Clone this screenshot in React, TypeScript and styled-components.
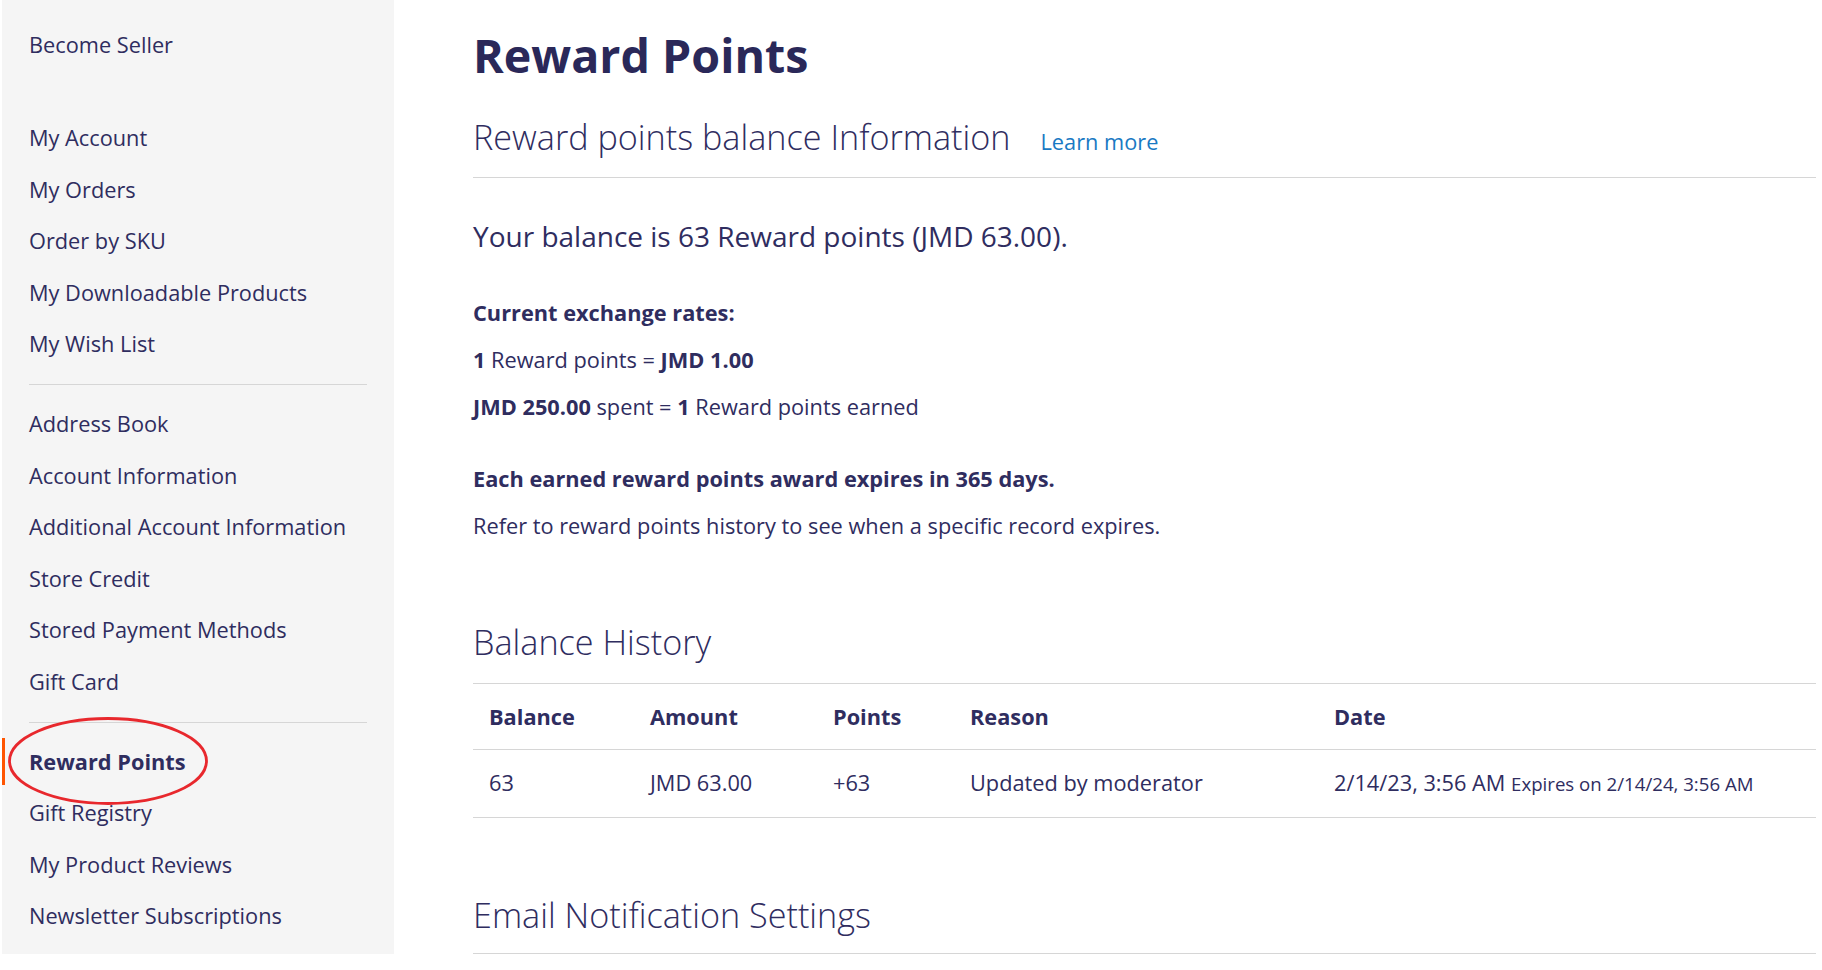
import React from 'react';
import styled, { createGlobalStyle } from 'styled-components';

const NAVY = '#2f2d5f';
const LINE = '#d6d6d6';

const GlobalStyle = createGlobalStyle`
  html, body { margin: 0; padding: 0; background: #ffffff; }
  body {
    font-family: "Open Sans", "Noto Sans", "Liberation Sans", sans-serif;
    color: ${NAVY};
  }
  * { box-sizing: border-box; }
`;

const Page = styled.div`
  display: flex;
  align-items: flex-start;
  padding: 0 6px 0 2px;
`;

const Sidebar = styled.aside`
  flex: 0 0 392px;
  width: 392px;
  background: #f5f5f5;
  padding: 19.25px 27px 12.25px 0;
`;

const NavList = styled.ul<{ $gap?: number }>`
  list-style: none;
  margin: 0;
  padding: 0 0 ${(p) => p.$gap ?? 0}px;
`;

const NavItem = styled.li`
  position: relative;
  padding: 2.25px 0;
`;

const NavLink = styled.a<{ $active?: boolean }>`
  display: block;
  border-left: 3px solid ${(p) => (p.$active ? '#ff5501' : 'transparent')};
  padding: 7.5px 0 7.5px 24px;
  font-size: 21.75px;
  line-height: 32px;
  font-weight: ${(p) => (p.$active ? 700 : 400)};
  color: ${NAVY};
  text-decoration: none;
  white-space: nowrap;
`;

const Separator = styled.li`
  height: 1px;
  background: ${LINE};
  margin: 14.5px 0 13px 27px;
`;

const Annotation = styled.svg`
  position: absolute;
  left: 5px;
  top: -20px;
  width: 202px;
  height: 90px;
  pointer-events: none;
  overflow: visible;
`;

const Main = styled.main`
  flex: 1;
  min-width: 0;
  margin-left: 79px;
  padding-top: 27px;
`;

const PageTitle = styled.h1`
  margin: 0;
  font-size: 46.6px;
  line-height: 56px;
  font-weight: 700;
  color: #2a2859;
`;

const BlockTitle = styled.div<{ $mt: number; $pb: number }>`
  display: flex;
  align-items: baseline;
  gap: 30px;
  margin-top: ${(p) => p.$mt}px;
  padding-bottom: ${(p) => p.$pb}px;
  border-bottom: 1px solid ${LINE};
`;

const TitleText = styled.h2`
  margin: 0;
  font-size: 34.2px;
  line-height: 44px;
  font-weight: 300;
  color: ${NAVY};
`;

const LearnMore = styled.a`
  font-size: 21.75px;
  color: #1979c3;
  text-decoration: none;
`;

const BalanceLine = styled.p`
  margin: 39px 0 0;
  font-size: 28px;
  line-height: 38px;
`;

const InfoGroup = styled.div<{ $mt: number }>`
  margin-top: ${(p) => p.$mt}px;
`;

const InfoLine = styled.p`
  margin: 0;
  font-size: 21.75px;
  line-height: 32px;
  & + & { margin-top: 15px; }
`;

const B = styled.strong`
  font-weight: 700;
`;

const Table = styled.table`
  width: 100%;
  border-collapse: collapse;
  font-size: 21.75px;
  line-height: 32px;
  color: ${NAVY};
`;

const Row = styled.tr`
  border-bottom: 1px solid ${LINE};
`;

const Th = styled.th`
  text-align: left;
  font-weight: 700;
  padding: 17px 16px 16px;
`;

const Td = styled.td`
  padding: 17px 16px;
  white-space: nowrap;
`;

const Small = styled.span`
  font-size: 18.65px;
`;

const navTop = ['My Account', 'My Orders', 'Order by SKU', 'My Downloadable Products', 'My Wish List'];
const navMid = ['Address Book', 'Account Information', 'Additional Account Information', 'Store Credit', 'Stored Payment Methods', 'Gift Card'];
const navBottom = ['Gift Registry', 'My Product Reviews', 'Newsletter Subscriptions'];

export default function App() {
  return (
    <>
      <GlobalStyle />
      <Page>
        <Sidebar>
          <NavList $gap={41.5}>
            <NavItem><NavLink href="#">Become Seller</NavLink></NavItem>
          </NavList>
          <NavList>
            {navTop.map((t) => (
              <NavItem key={t}><NavLink href="#">{t}</NavLink></NavItem>
            ))}
            <Separator />
            {navMid.map((t) => (
              <NavItem key={t}><NavLink href="#">{t}</NavLink></NavItem>
            ))}
            <Separator />
            <NavItem>
              <NavLink as="strong" $active>Reward Points</NavLink>
              <Annotation viewBox="0 0 202 90">
                <ellipse cx="101" cy="45" rx="98.5" ry="42.5" fill="none" stroke="#e8282d" strokeWidth="2.8" />
              </Annotation>
            </NavItem>
            {navBottom.map((t) => (
              <NavItem key={t}><NavLink href="#">{t}</NavLink></NavItem>
            ))}
          </NavList>
        </Sidebar>

        <Main>
          <PageTitle>Reward Points</PageTitle>

          <BlockTitle $mt={32} $pb={18}>
            <TitleText>Reward points balance Information</TitleText>
            <LearnMore href="#">Learn more</LearnMore>
          </BlockTitle>

          <BalanceLine>Your balance is 63 Reward points (JMD 63.00).</BalanceLine>

          <InfoGroup $mt={41.6}>
            <InfoLine><B>Current exchange rates:</B></InfoLine>
            <InfoLine><B>1</B> Reward points = <B>JMD 1.00</B></InfoLine>
            <InfoLine><B>JMD 250.00</B> spent = <B>1</B> Reward points earned</InfoLine>
          </InfoGroup>

          <InfoGroup $mt={40}>
            <InfoLine><B>Each earned reward points award expires in 365 days.</B></InfoLine>
            <InfoLine>Refer to reward points history to see when a specific record expires.</InfoLine>
          </InfoGroup>

          <BlockTitle $mt={78} $pb={19}>
            <TitleText>Balance History</TitleText>
          </BlockTitle>

          <Table>
            <colgroup>
              <col style={{ width: 161 }} />
              <col style={{ width: 183 }} />
              <col style={{ width: 137 }} />
              <col style={{ width: 364 }} />
              <col />
            </colgroup>
            <thead>
              <Row>
                <Th>Balance</Th>
                <Th>Amount</Th>
                <Th>Points</Th>
                <Th>Reason</Th>
                <Th>Date</Th>
              </Row>
            </thead>
            <tbody>
              <Row>
                <Td>63</Td>
                <Td>JMD 63.00</Td>
                <Td>+63</Td>
                <Td>Updated by moderator</Td>
                <Td>2/14/23, 3:56 AM <Small>Expires on 2/14/24, 3:56 AM</Small></Td>
              </Row>
            </tbody>
          </Table>

          <BlockTitle $mt={75} $pb={16}>
            <TitleText>Email Notification Settings</TitleText>
          </BlockTitle>
        </Main>
      </Page>
    </>
  );
}
